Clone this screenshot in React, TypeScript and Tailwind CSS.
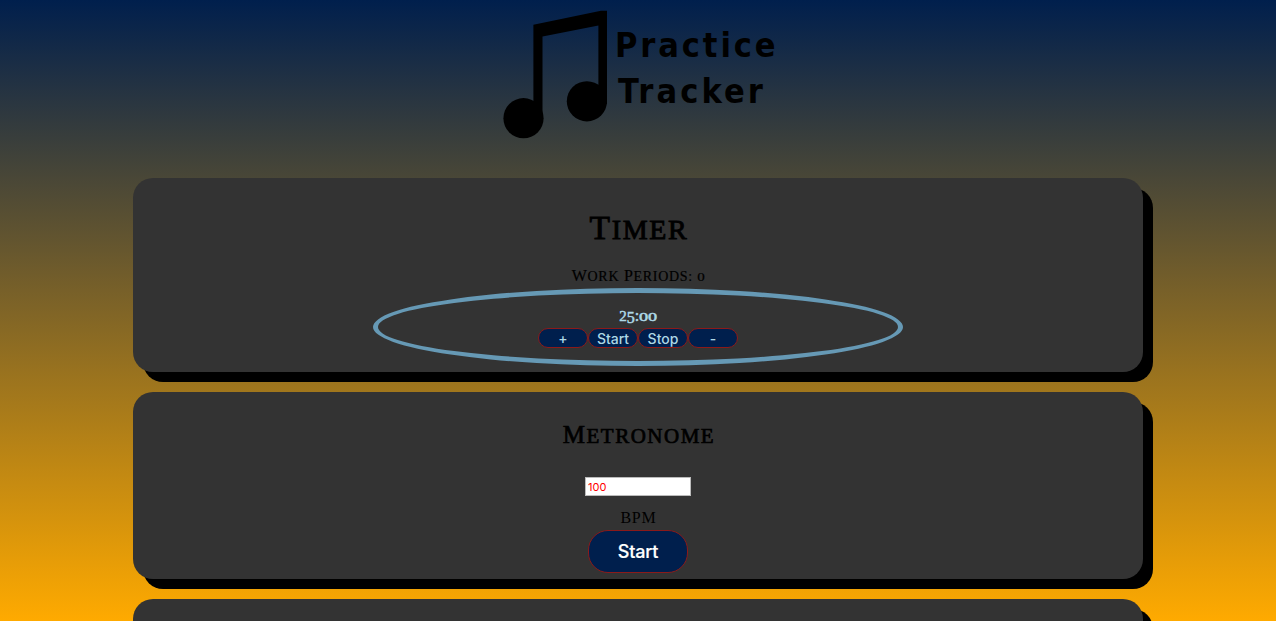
import React from "react";

function SmallCaps({ text, small }: { text: string; small: string }) {
  return (
    <>
      {text.split(" ").map((word, i) => (
        <React.Fragment key={i}>
          {i > 0 && " "}
          {word[0]}
          <span className={`uppercase ${small}`}>{word.slice(1)}</span>
        </React.Fragment>
      ))}
    </>
  );
}

function Logo() {
  return (
    <header className="flex h-[178px] shrink-0 justify-center">
      <div className="flex w-[272px] pt-[10px]">
        <svg width="105" height="130" viewBox="0 0 105 130" className="shrink-0">
          <circle cx="21.5" cy="108.2" r="20.1" />
          <circle cx="84.9" cy="91.3" r="20.1" />
          <path d="M31.4 14.8 L99 .8 H105 V94 H96.4 V15.5 L40.5 26.5 V109 H31.4 Z" />
        </svg>
        <h1 className="ml-[8px] pt-[12px] font-['DejaVu_Sans_Condensed','DejaVu_Sans'] text-[34px] font-bold [font-stretch:75%] leading-[46px] tracking-[2.9px] whitespace-nowrap">
          <span className="block">Practice</span>
          <span className="block pl-[3px] tracking-[3.1px]">Tracker</span>
        </h1>
      </div>
    </header>
  );
}

const card =
  "flex w-[1010px] shrink-0 flex-col items-center rounded-[20px] bg-[#333333] shadow-[10px_10px_0_#000]";

const pill =
  "flex h-5 w-[50px] items-center justify-center rounded-[10px] border border-[#8b1a1a] bg-[#001f4d] pt-[2px] text-[14px] leading-none text-[#add8e6]";

export default function App() {
  return (
    <div className="flex h-[621px] flex-col items-center overflow-hidden bg-[linear-gradient(#001f4d,#ffaa00)] font-['Liberation_Serif',serif] text-black">
      <Logo />
      <main className="flex flex-col gap-5">
        <section className={`${card} h-[194px]`}>
          <h2 className="mt-[28px] h-[44px] pl-[2px] text-[33.5px] leading-[44px] tracking-[1.7px] [-webkit-text-stroke:0.9px_black]">
            <SmallCaps text="Timer" small="text-[28px]" />
          </h2>
          <p className="mt-[16px] h-[20px] text-[16px] leading-[20px] tracking-[0.7px] [-webkit-text-stroke:0.2px_black]">
            <SmallCaps text="Work Periods:" small="text-[14px]" />{" "}
            <span className="inline-block scale-x-125 text-[12px]">0</span>
          </p>
          <div className="mt-[2px] flex h-[78px] w-[530px] flex-col items-center rounded-[50%] border-[5px] border-[#6699b5] pt-[11px]">
            <div className="flex h-[24px] items-baseline text-[16px] leading-[23px] text-[#add8e6] [-webkit-text-stroke:0.5px_#add8e6]">
              <span className="text-[15px]">2</span>
              <span className="relative top-[2px]">5</span>
              <span>:</span>
              <span className="inline-block origin-left scale-x-[1.35] pr-[4px] text-[13.5px]">00</span>
            </div>
            <div className="flex font-['Inter',sans-serif] font-medium">
              <button className={pill}>+</button>
              <button className={pill}>Start</button>
              <button className={pill}>Stop</button>
              <button className={pill}>-</button>
            </div>
          </div>
        </section>
        <section className={`${card} h-[187px]`}>
          <h2 className="mt-[25px] h-[36px] pl-[2px] text-[25px] leading-[36px] tracking-[1.5px] [-webkit-text-stroke:0.7px_black]">
            <SmallCaps text="Metronome" small="text-[21px]" />
          </h2>
          <input
            defaultValue="100"
            className="mt-[24px] h-[19px] w-[106px] border border-[#bbbbbb] bg-white px-[2px] font-['Inter',sans-serif] text-[11px] text-[#ff0000]"
          />
          <p className="mt-[12px] h-[20px] pl-px text-[16px] leading-[20px] tracking-[0.8px]">BPM</p>
          <button className="mt-[2px] flex h-[43px] w-[100px] items-center justify-center rounded-[20px] border border-[#8b1a1a] bg-[#001f4d] pt-px font-['Inter',sans-serif] text-[18px] font-medium leading-none tracking-[-0.2px] text-white [-webkit-text-stroke:0.2px_white]">
            Start
          </button>
        </section>
        <section className={`${card} h-[200px]`} />
      </main>
    </div>
  );
}
